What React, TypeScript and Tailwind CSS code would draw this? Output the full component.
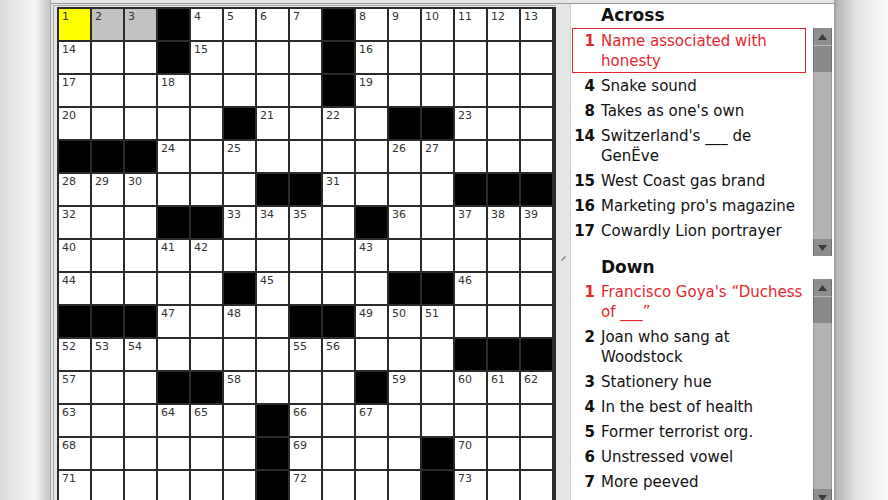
const BLACK: number[][] = [
  [3, 8],
  [3, 8],
  [8],
  [5, 10, 11],
  [0, 1, 2],
  [6, 7, 12, 13, 14],
  [3, 4, 9],
  [],
  [5, 10, 11],
  [0, 1, 2, 7, 8],
  [12, 13, 14],
  [3, 4, 9],
  [6],
  [6, 11],
  [6, 11],
]

const isBlack = (r: number, c: number) =>
  r < 0 || c < 0 || r > 14 || c > 14 || BLACK[r].includes(c)

type Clue = { n: number; text: string; active?: boolean; boxed?: boolean }

const across: Clue[] = [
  { n: 1, text: 'Name associated with honesty', active: true, boxed: true },
  { n: 4, text: 'Snake sound' },
  { n: 8, text: "Takes as one's own" },
  { n: 14, text: "Switzerland's ___ de GenËve" },
  { n: 15, text: 'West Coast gas brand' },
  { n: 16, text: "Marketing pro's magazine" },
  { n: 17, text: 'Cowardly Lion portrayer' },
]

const down: Clue[] = [
  { n: 1, text: 'Francisco Goya\'s \u201cDuchess of ___\u201d', active: true },
  { n: 2, text: 'Joan who sang at Woodstock' },
  { n: 3, text: 'Stationery hue' },
  { n: 4, text: 'In the best of health' },
  { n: 5, text: 'Former terrorist org.' },
  { n: 6, text: 'Unstressed vowel' },
  { n: 7, text: 'More peeved' },
]

function Grid() {
  let num = 0
  const cells = []
  for (let r = 0; r < 15; r++) {
    for (let c = 0; c < 15; c++) {
      const black = isBlack(r, c)
      let label: number | null = null
      if (!black) {
        const startsAcross = isBlack(r, c - 1) && !isBlack(r, c + 1)
        const startsDown = isBlack(r - 1, c) && !isBlack(r + 1, c)
        if (startsAcross || startsDown) label = ++num
      }
      let bg = 'bg-white'
      if (black) bg = 'bg-black'
      else if (r === 0 && c === 0) bg = 'bg-[#ffff00]'
      else if (r === 0 && (c === 1 || c === 2)) bg = 'bg-[#c2c2c2]'
      cells.push(
        <div key={`${r}-${c}`} className={`${bg} h-[31px] w-[31px] pl-[3px] pt-px`}>
          {label !== null && (
            <span className="block text-[11px] leading-[13px] text-[#333]">{label}</span>
          )}
        </div>
      )
    }
  }
  return (
    <div className="grid grid-cols-[repeat(15,31px)] gap-[2px] bg-[#2b2b2b] p-[2px]">
      {cells}
    </div>
  )
}

function Arrow({ up }: { up?: boolean }) {
  return (
    <div className="flex h-[17px] items-center justify-center border-x border-[#707070] bg-[#8e8e8e]">
      <svg width="9" height="6" viewBox="0 0 9 6">
        <path d={up ? 'M4.5 0 L9 6 L0 6 Z' : 'M0 0 L9 0 L4.5 6 Z'} fill="#3a3a3a" />
      </svg>
    </div>
  )
}

function Scrollbar() {
  return (
    <div className="flex w-[19px] flex-col">
      <Arrow up />
      <div className="h-[27px] border-x border-t border-[#707070] border-t-[#b9b9b9] bg-[#8a8a8a]" />
      <div className="flex-1 border-x border-[#9a9a9a] bg-[#b3b3b3]" />
      <Arrow />
    </div>
  )
}

function ClueList({ clues }: { clues: Clue[] }) {
  return (
    <div className="flex-1 overflow-hidden pl-px pr-[7px]">
      {clues.map((c) => (
        <div
          key={c.n}
          className={`flex border pt-[2px] pb-px text-[15px] leading-[20px] ${
            c.boxed ? 'border-[#e2232f]' : 'border-transparent'
          } ${c.active ? 'text-[#e5262d]' : 'text-[#111]'}`}
        >
          <span className="w-[22px] shrink-0 text-right font-bold">{c.n}</span>
          <span className="ml-[6px] flex-1">{c.text}</span>
        </div>
      ))}
    </div>
  )
}

export default function App() {
  return (
    <div className="flex h-[500px] w-[888px] overflow-hidden bg-white font-['DejaVu_Sans',sans-serif]">
      <div className="w-[50px] shrink-0 bg-gradient-to-r from-[#dcdcdc] via-[#f5f5f5] via-70% to-[#c6c6c6]" />
      <div className="flex w-[786px] shrink-0 flex-col border-l border-r-2 border-[#a4a4a4] bg-[#e6e6e6] pt-[3px]">
        <div className="flex flex-1 border-t border-[#9c9c9c]">
          <div className="w-[505px] shrink-0 pl-[2px] pt-px">
            <div className="border-l border-t border-[#a8a8a8] pl-[3px] pt-px">
              <Grid />
            </div>
          </div>
          <div className="w-[15px] shrink-0 border-r border-[#d0d0d0] pl-[5px] pt-[252px]">
            <svg width="5" height="5" viewBox="0 0 5 5">
              <path d="M0.5 4.5 L4.5 0.5" stroke="#7a7a7a" strokeWidth="1.2" />
            </svg>
          </div>
          <div className="flex flex-1 flex-col bg-white">
            <div className="flex h-[24px] shrink-0 items-center pl-[30px] text-[17px] font-bold text-[#111]">
              Across
            </div>
            <div className="flex h-[228px] shrink-0 pr-[2px]">
              <ClueList clues={across} />
              <Scrollbar />
            </div>
            <div className="flex h-[23px] shrink-0 items-center pl-[30px] text-[17px] font-bold text-[#111]">
              Down
            </div>
            <div className="flex h-[227px] shrink-0 pr-[2px]">
              <ClueList clues={down} />
              <Scrollbar />
            </div>
          </div>
        </div>
      </div>
      <div className="flex-1 bg-gradient-to-r from-[#b4b4b4] via-[#e4e4e4] via-40% to-[#fafafa]" />
    </div>
  )
}
